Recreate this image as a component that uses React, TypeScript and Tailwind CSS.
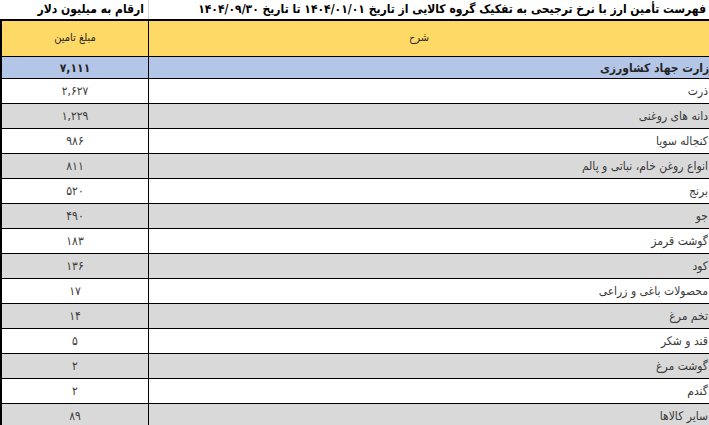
import React from "react";

const rows: { v: string; t: string; grey: boolean }[] = [
  { v: "۲,۶۲۷", t: "ذرت", grey: false },
  { v: "۱,۲۲۹", t: "دانه های روغنی", grey: true },
  { v: "۹۸۶", t: "کنجاله سویا", grey: false },
  { v: "۸۱۱", t: "انواع روغن خام، نباتی و پالم", grey: true },
  { v: "۵۲۰", t: "برنج", grey: false },
  { v: "۴۹۰", t: "جو", grey: true },
  { v: "۱۸۳", t: "گوشت قرمز", grey: false },
  { v: "۱۳۶", t: "کود", grey: true },
  { v: "۱۷", t: "محصولات باغی و زراعی", grey: false },
  { v: "۱۴", t: "تخم مرغ", grey: true },
  { v: "۵", t: "قند و شکر", grey: false },
  { v: "۲", t: "گوشت مرغ", grey: true },
  { v: "۲", t: "گندم", grey: false },
  { v: "۸۹", t: "سایر کالاها", grey: true },
];

export default function App() {
  return (
    <div
      className="w-[709px] h-[425px] overflow-hidden bg-white text-[#262626]"
      style={{ fontFamily: '"DejaVu Sans Condensed", "DejaVu Sans", sans-serif' }}
    >
      <div className="flex h-[19px] items-center">
        <div
          dir="rtl"
          className="w-[149px] h-full shrink-0 border-r border-[#d4d4d4] text-right pr-[4px] text-[12px] font-bold leading-[19px] text-black whitespace-nowrap overflow-hidden"
        >
          ارقام به میلیون دلار
        </div>
        <div
          dir="rtl"
          className="flex-1 h-full text-right pr-[3px] text-[12px] font-bold leading-[19px] text-black whitespace-nowrap overflow-hidden"
        >
          فهرست تأمین ارز با نرخ ترجیحی به تفکیک گروه کالایی از تاریخ ۱۴۰۴/۰۱/۰۱ تا تاریخ ۱۴۰۴/۰۹/۳۰
        </div>
      </div>
      <div className="border-l-2 border-t-2 border-black">
        <div className="flex h-[36px] bg-[#ffd966] border-b border-black text-[11px]">
          <div className="w-[147px] shrink-0 border-r border-black flex items-center justify-center" dir="rtl">
            مبلغ تامین
          </div>
          <div className="flex-1 flex items-center justify-center pr-[20px]" dir="rtl">
            شرح
          </div>
        </div>
        <div className="flex h-[22px] bg-[#b4c6e7] border-b border-black text-[12px] font-bold">
          <div className="w-[147px] shrink-0 border-r border-black flex items-center justify-center">
            ۷,۱۱۱
          </div>
          <div className="flex-1 flex items-center justify-start overflow-hidden" dir="rtl">
            <span className="mr-[-7px] whitespace-nowrap">وزارت جهاد کشاورزی</span>
          </div>
        </div>
        {rows.map((r, i) => (
          <div
            key={i}
            className={
              "flex h-[25px] border-b border-black text-[12px] text-[#3a3a3a] " +
              (r.grey ? "bg-[#d9d9d9]" : "bg-white")
            }
          >
            <div className="w-[147px] shrink-0 border-r border-black flex items-center justify-center">
              {r.v}
            </div>
            <div className="flex-1 flex items-center justify-start pr-[1px] whitespace-nowrap" dir="rtl">
              {r.t}
            </div>
          </div>
        ))}
      </div>
    </div>
  );
}
